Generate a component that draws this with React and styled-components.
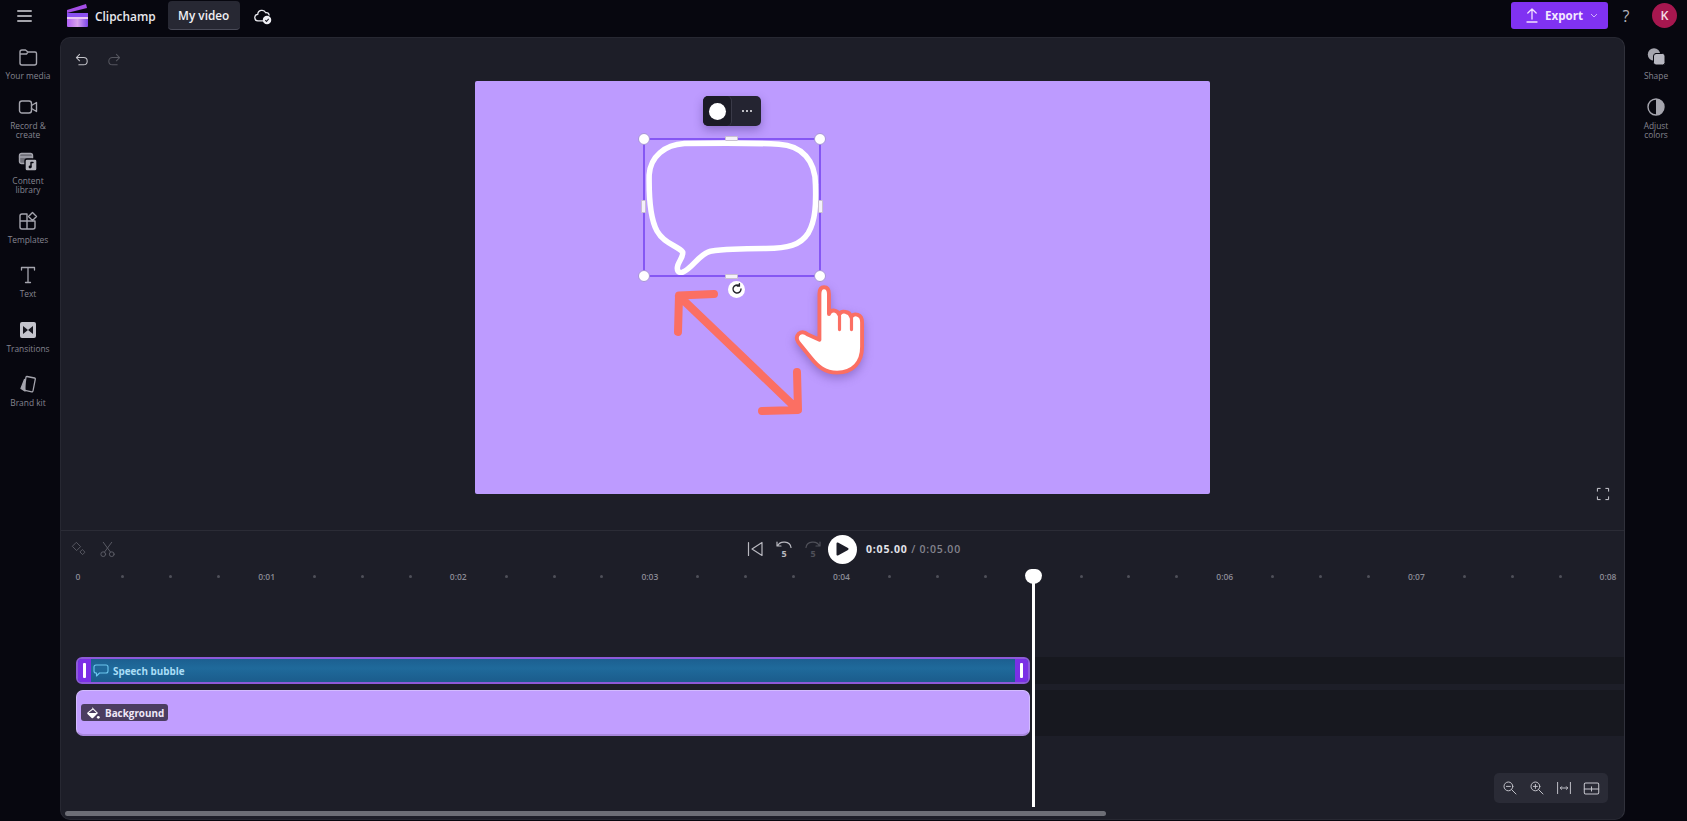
import React from "react";
import styled, { createGlobalStyle } from "styled-components";

const Global = createGlobalStyle`
    html, body, #root {
        margin: 0;
        height: 100%;
        background: #07070f;
    }
    body {
        font-family: "Open Sans", "Noto Sans", sans-serif;
        overflow: hidden;
    }
`

const Page = styled.div`
    width: 100vw;
    height: 100vh;
    display: grid;
    grid-template-columns: 60px 1fr 62px;
    grid-template-rows: 37px 1fr;
`

const TopBar = styled.header`
    grid-column: 1 / -1;
    display: flex;
    align-items: center;
    padding: 0 10px 6px 17px;
    color: #e8e8ee;
`

const MenuBtn = styled.div`
    width: 15px;
    display: flex;
    margin-right: 34px;
    svg { display: block; }
`

const Brand = styled.div`
    font-size: 11.9px;
    font-weight: 600;
    margin-left: 7px;
    margin-right: 12px;
`

const Tab = styled.div`
    width: 72px;
    height: 29px;
    display: flex;
    align-items: center;
    justify-content: center;
    background: #272833;
    border-bottom: 1px solid #4a4b58;
    border-radius: 4px;
    font-size: 11.8px;
    font-weight: 600;
    box-sizing: border-box;
    color: #f0f0f5;
`

const CloudWrap = styled.div`
    margin-left: 14px;
    display: flex;
`

const TopRight = styled.div`
    margin-left: auto;
    display: flex;
    align-items: center;
`

const ExportBtn = styled.div`
    width: 97px;
    height: 27px;
    background: #8032f2;
    border-radius: 3px;
    display: flex;
    align-items: center;
    padding-left: 15px;
    box-sizing: border-box;
    gap: 7px;
    color: #f2e8ff;
    font-size: 11.6px;
    font-weight: 700;
`

const Help = styled.div`
    margin: 0 20px 0 12px;
    font-size: 16px;
    color: #b4b4bc;
    width: 12px;
    text-align: center;
`

const Avatar = styled.div`
    width: 25px;
    height: 25px;
    border-radius: 50%;
    background: #a6174f;
    display: flex;
    align-items: center;
    justify-content: center;
    font-size: 12.5px;
    font-weight: 600;
    color: #f4dbe4;
`

const Rail = styled.nav`
    display: grid;
    grid-template-rows: ${p => p.$rows};
    padding: 10px ${p => p.$inset || 0}px 0 0;
    justify-items: center;
    align-content: start;
`

const RailItem = styled.div`
    display: flex;
    flex-direction: column;
    align-items: center;
    color: #a5a5ae;
    width: 56px;
    svg { display: block; height: 20px; }
`

const RailLabel = styled.span`
    margin-top: 4px;
    font-size: 8.4px;
    line-height: 9px;
    text-align: center;
    color: #85858f;
`

const Panel = styled.main`
    position: relative;
    display: flex;
    flex-direction: column;
    margin-bottom: 1px;
    background: #1d1e28;
    border: 1px solid #272832;
    border-right-color: #30313b;
    border-radius: 10px;
    overflow: hidden;
    box-sizing: border-box;
`

const Stage = styled.section`
    height: 492px;
    flex: none;
    position: relative;
    display: flex;
    flex-direction: column;
`

const History = styled.div`
    height: 43px;
    display: flex;
    align-items: center;
    padding: 0 0 0 13px;
    gap: 16px;
    color: #c2c2c8;
    flex: none;
`

const RedoWrap = styled.span`
    display: flex;
    color: #55565f;
`

const Canvas = styled.div`
    position: relative;
    width: 735px;
    height: 413px;
    margin: 0 auto;
    background: #bd9bff;
    border-radius: 2px;
`

const ResizeHint = styled.svg`
    position: absolute;
    left: 195px;
    top: 205px;
`

const HandCursor = styled.svg`
    position: absolute;
    left: 318px;
    top: 204px;
    filter: drop-shadow(0 4px 5px rgba(70, 40, 120, .35));
`

const FloatPill = styled.div`
    position: absolute;
    left: 228px;
    top: 15px;
    width: 58px;
    height: 30px;
    display: flex;
    background: #242431;
    border-radius: 5px;
    box-shadow: 0 4px 10px rgba(50, 30, 100, .35);
    overflow: hidden;
`

const Swatch = styled.div`
    width: 28px;
    display: flex;
    align-items: center;
    justify-content: center;
    background: #1b1b26;
    border-right: 1px solid #3a3a48;
    border-radius: 5px;
    &::after {
        content: "";
        width: 17px;
        height: 17px;
        background: #fff;
        border-radius: 50%;
    }
`

const Dots = styled.div`
    flex: 1;
    color: #e6e6ec;
    display: flex;
    align-items: center;
    justify-content: center;
    gap: 2px;
    i {
        width: 2px;
        height: 2px;
        border-radius: 50%;
        background: #f0f0f5;
    }
`

const Selection = styled.div`
    position: absolute;
    left: 168px;
    top: 56.5px;
    width: 178px;
    height: 139px;
    border: 2px solid #8557f3;
    box-sizing: border-box;
    svg { display: block; width: 100%; height: 100%; }
`

const Corner = styled.span`
    position: absolute;
    ${p => p.$y}: -7px;
    ${p => p.$x}: -7px;
    width: 12px;
    height: 12px;
    background: #fff;
    border: 1px solid #a794d8;
    box-sizing: border-box;
    border-radius: 50%;
`

const EdgeH = styled.span`
    position: absolute;
    ${p => p.$y}: -4px;
    left: 50%;
    margin-left: -7px;
    width: 13px;
    height: 5px;
    background: #f4f0fa;
    border: 1px solid #c8c0d0;
    box-sizing: border-box;
    border-radius: 1px;
`

const EdgeV = styled.span`
    position: absolute;
    ${p => p.$x}: -4px;
    top: 50%;
    margin-top: -7px;
    width: 5px;
    height: 13px;
    background: #f4f0fa;
    border: 1px solid #c8c0d0;
    box-sizing: border-box;
    border-radius: 1px;
`

const RotateKnob = styled.div`
    position: absolute;
    left: 83px;
    bottom: -23px;
    width: 17px;
    height: 17px;
    background: #fff;
    border-radius: 50%;
    display: flex;
    align-items: center;
    justify-content: center;
    svg { width: 12px; height: 12px; }
`

const FullScreen = styled.div`
    position: absolute;
    right: 14px;
    top: 449px;
    color: #cfcfd6;
    display: flex;
`

const Timeline = styled.section`
    flex: 1;
    display: flex;
    flex-direction: column;
    border-top: 1px solid #2b2c36;
`

const TimeBar = styled.div`
    height: 36px;
    display: flex;
    align-items: center;
    flex: none;
`

const EditTools = styled.div`
    width: 684px;
    padding-left: 10px;
    box-sizing: border-box;
    display: flex;
    align-items: center;
    gap: 12px;
    color: #5d5e68;
`

const Transport = styled.div`
    display: flex;
    align-items: center;
    color: #b9b9c0;
    gap: 9px;
`

const ForwardWrap = styled.span`
    display: flex;
    color: #4f5059;
`

const PlayBtn = styled.div`
    width: 29px;
    height: 29px;
    border-radius: 50%;
    background: #fff;
    display: flex;
    align-items: center;
    justify-content: center;
    margin-left: -4px;
`

const Clock = styled.div`
    font-size: 10.5px;
    letter-spacing: .8px;
    font-weight: 700;
    color: #e4e4ea;
    span {
        font-weight: 600;
        color: #83838d;
    }
`

const Ruler = styled.div`
    height: 12px;
    margin-top: 3px;
    padding: 0 16px 0 14px;
    display: flex;
    align-items: center;
    justify-content: space-between;
    flex: none;
`

const Tick = styled.div`
    width: 0;
    display: flex;
    justify-content: center;
    overflow: visible;
    font-size: 8.5px;
    font-weight: 600;
    white-space: nowrap;
    color: #8b8b95;
    transform: translateX(${p => p.$nudge || 0}px);
`

const TickDot = styled.i`
    flex: none;
    width: 3px;
    height: 3px;
    border-radius: 50%;
    background: #4f5059;
`

const Tracks = styled.div`
    margin-top: 75px;
    display: flex;
    flex-direction: column;
    gap: 6px;
`

const Lane = styled.div`
    display: flex;
    height: ${p => p.$h}px;
    padding-left: 15px;
`

const LaneRest = styled.div`
    flex: 1;
    background: #17181f;
    margin-left: 3px;
`

const BubbleClip = styled.div`
    width: 954px;
    flex: none;
    display: flex;
    align-items: stretch;
    background: linear-gradient(#1c5f90, #1f6a9b 40%, #1b5c8c);
    border: 2px solid #8d5ad8;
    border-radius: 6px;
    overflow: hidden;
    box-sizing: border-box;
`

const ClipGrip = styled.div`
    width: 13px;
    flex: none;
    background: #7b2fe6;
    display: flex;
    align-items: center;
    justify-content: center;
    &::after {
        content: "";
        width: 3px;
        height: 15px;
        background: #fff;
        border-radius: 1px;
    }
`

const ClipBody = styled.div`
    flex: 1;
    display: flex;
    align-items: center;
    padding-left: 2px;
    gap: 4px;
    color: #a9ddf6;
    font-size: 9.9px;
    font-weight: 700;
`

const BackgroundClip = styled.div`
    width: 954px;
    flex: none;
    display: flex;
    align-items: center;
    padding-left: 4px;
    background: #c19eff;
    border: 1px solid #d3bbff;
    border-bottom: 2px solid #a888dc;
    border-radius: 7px;
    box-sizing: border-box;
`

const ClipTag = styled.div`
    height: 17px;
    padding: 0 4px 0 5px;
    display: flex;
    align-items: center;
    gap: 5px;
    background: #4b3d60;
    border-radius: 3px;
    color: #efe8f8;
    font-size: 9.9px;
    font-weight: 700;
`

const Playhead = styled.div`
    position: absolute;
    left: 971px;
    top: 531px;
    bottom: 12px;
    width: 3px;
    background: #fff;
    &::before {
        content: "";
        position: absolute;
        left: -7px;
        top: 0;
        width: 17px;
        height: 15px;
        background: #fff;
        border-radius: 7px 7px 9px 9px;
    }
`

const ZoomTools = styled.div`
    position: absolute;
    right: 16px;
    bottom: 16px;
    width: 114px;
    height: 30px;
    display: flex;
    align-items: center;
    justify-content: space-around;
    padding: 0 3px;
    box-sizing: border-box;
    background: #2a2b36;
    border-radius: 5px;
    color: #c6c6cd;
`

const Scrollbar = styled.div`
    position: absolute;
    left: 4px;
    bottom: 3px;
    width: 1041px;
    height: 5px;
    background: #6d6e76;
    border-radius: 3px;
`

const Ico = ({ s = 20, w, h, children, sw = 1.4, fill = "none", vb }) => (
    <svg width={w || s} height={h || s} viewBox={vb || "0 0 20 20"} fill={fill} stroke="currentColor"
        strokeWidth={sw} strokeLinecap="round" strokeLinejoin="round">
        {children}
    </svg>
)

const Logo = () => (
    <svg width="22" height="23" viewBox="0 0 22 23">
        <defs>
            <linearGradient id="clap" x1="0" y1="0" x2="1" y2="0">
                <stop offset="0" stopColor="#b061f5" />
                <stop offset=".5" stopColor="#d9a2ee" />
                <stop offset="1" stopColor="#7b45e8" />
            </linearGradient>
        </defs>
        <path d="M1 9 L21 4 L20 0 L1 6 Z" fill="#a44ee6" />
        <rect x="1" y="9" width="21" height="14" rx="1" fill="url(#clap)" />
        <rect x="1" y="9" width="21" height="4" fill="#8a4ff0" />
        <rect x="1" y="13" width="21" height="2" fill="#e9c6f5" />
    </svg>
)

const Cloud = () => (
    <svg width="18" height="18" viewBox="0 0 17 17" fill="none" stroke="#e8e8ee" strokeWidth="1.2">
        <path d="M9 13 H4 a3 3 0 0 1-.5-6 a4 4 0 0 1 7.6-1.6 A3 3 0 0 1 14.4 8" />
        <circle cx="12.3" cy="12.3" r="4" fill="#f0f0f5" stroke="none" />
        <path d="M10.6 12.4 l1.2 1.2 l2.1-2.4" stroke="#1b1b26" strokeWidth="1" />
    </svg>
)

const railItems = [
    {
        label: ["Your media"], icon: (
            <Ico w={20}><path d="M2 5 a2 2 0 0 1 2-2 h3.5 l2.5 2 h7 a1.5 1.5 0 0 1 1.5 1.5 V16 a2 2 0 0 1-2 2 H4 a2 2 0 0 1-2-2 Z M2 7 h6.5 l1.5-2" /></Ico>
        )
    },
    {
        label: ["Record &", "create"], icon: (
            <Ico><rect x="1.5" y="4" width="12" height="12" rx="2.5" /><path d="M13.5 8.5 L18.5 5.5 V14.5 L13.5 11.5" /></Ico>
        )
    },
    {
        label: ["Content", "library"], icon: (
            <Ico>
                <rect x="1.5" y="1.5" width="13" height="10" rx="2" fill="#6f6f78" />
                <path d="M1.5 5 h13" />
                <rect x="7" y="7" width="12" height="12" rx="2" fill="#b5b5bd" stroke="#07070f" />
                <circle cx="12" cy="15" r="1.4" fill="#07070f" stroke="none" />
                <path d="M13 15 V10.5 h2" stroke="#07070f" />
            </Ico>
        )
    },
    {
        label: ["Templates"], icon: (
            <Ico>
                <path d="M2 5 a2 2 0 0 1 2-2 h5 v7 H2 Z M2 10 h7 v8 H4 a2 2 0 0 1-2-2 Z M9 10 h8 v6 a2 2 0 0 1-2 2 H9 Z" />
                <path d="M14.5 1.5 L18.5 5.5 L14.5 9.5 L10.5 5.5 Z" />
            </Ico>
        )
    },
    {
        label: ["Text"], icon: (
            <Ico sw={1.3}><path d="M3.5 5 V2.5 H16.5 V5 M10 2.5 V17.5 M7.5 17.5 H12.5" /></Ico>
        )
    },
    {
        label: ["Transitions"], icon: (
            <svg width="20" height="20" viewBox="0 0 20 20">
                <path d="M4 2 H16 a2 2 0 0 1 2 2 V16 a2 2 0 0 1-2 2 H4 a2 2 0 0 1-2-2 V4 a2 2 0 0 1 2-2 Z" fill="#c4c4cc" />
                <path d="M5 6 L10 10 L5 14 Z" fill="#17171f" />
                <path d="M15 6 L10 10 L15 14 Z" fill="#17171f" />
            </svg>
        )
    },
    {
        label: ["Brand kit"], icon: (
            <Ico sw={1.3}>
                <path d="M9 2.5 L16.5 4 a1 1 0 0 1 .8 1.2 L15 17 a1 1 0 0 1-1.2.8 L7 16.4 a1 1 0 0 1-.8-1.2 L8 3 a1 1 0 0 1 1-.5 Z" />
                <path d="M6.5 5.5 L3 14.5 L7 17 Z" fill="currentColor" />
            </Ico>
        )
    },
]

const rightItems = [
    {
        label: ["Shape"], icon: (
            <Ico sw={0} fill="currentColor">
                <circle cx="8" cy="7.5" r="6.2" />
                <rect x="7.5" y="6.5" width="11.5" height="11.5" rx="2.5" fill="#b7b7c0" stroke="#07070f" strokeWidth="1" />
            </Ico>
        )
    },
    {
        label: ["Adjust", "colors"], icon: (
            <Ico sw={1.4}>
                <circle cx="10" cy="10" r="8" />
                <path d="M10 2 a8 8 0 0 1 0 16 Z" fill="currentColor" stroke="none" />
            </Ico>
        )
    },
]

const ToolRail = ({ items, rows, inset }) => (
    <Rail $rows={rows} $inset={inset}>
        {items.map((item) => (
            <RailItem key={item.label.join(" ")}>
                {item.icon}
                <RailLabel>
                    {item.label.map((line) => <div key={line}>{line}</div>)}
                </RailLabel>
            </RailItem>
        ))}
    </Rail>
)

const ticks = Array.from({ length: 33 }, (_, i) => i)

const App = () => (
    <Page>
        <Global />
        <TopBar>
            <MenuBtn>
                <svg width="15" height="12" viewBox="0 0 15 12" stroke="#d8d8de" strokeWidth="1.5" strokeLinecap="round">
                    <path d="M0.8 1 H14.2 M0.8 6 H14.2 M0.8 11 H14.2" />
                </svg>
            </MenuBtn>
            <Logo />
            <Brand>Clipchamp</Brand>
            <Tab>My video</Tab>
            <CloudWrap><Cloud /></CloudWrap>
            <TopRight>
                <ExportBtn>
                    <svg width="12" height="15" viewBox="0 0 12 15" fill="none" stroke="#f2e0ff" strokeWidth="1.3" strokeLinecap="round" strokeLinejoin="round">
                        <path d="M6 11 V1 M1.8 5 L6 1 L10.2 5 M1 14 H11" />
                    </svg>
                    Export
                    <svg width="8" height="5" viewBox="0 0 8 5" fill="none" stroke="#d0b0fa" strokeWidth="1"><path d="M1 1 L4 4 L7 1" /></svg>
                </ExportBtn>
                <Help>?</Help>
                <Avatar>K</Avatar>
            </TopRight>
        </TopBar>

        <ToolRail items={railItems} rows="50px 55px 59px 54px 55px 54px 54px" inset={4} />

        <Panel>
            <Stage>
                <History>
                    <Ico s={16} sw={1.3}><path d="M7 3 L3 7 L7 11 M3 7 H12 a4.5 4.5 0 0 1 0 9 H6" /></Ico>
                    <RedoWrap>
                        <Ico s={16} sw={1.3}><path d="M13 3 L17 7 L13 11 M17 7 H8 a4.5 4.5 0 0 0 0 9 H14" /></Ico>
                    </RedoWrap>
                </History>
                <Canvas>
                    <FloatPill>
                        <Swatch />
                        <Dots><i /><i /><i /></Dots>
                    </FloatPill>
                    <Selection>
                        <svg viewBox="72 173 528 414" fill="none" stroke="#fff" strokeWidth="17" strokeLinejoin="round" strokeLinecap="round">
                            <path d="M190 184 C290 182 400 182 480 186 C550 190 592 235 592 310 C594 370 592 420 570 458 C545 497 505 505 440 506 C380 506 320 507 270 514 C235 522 215 567 185 578 C172 582 165 574 170 557 C175 542 186 532 185 517 C170 497 128 492 106 452 C83 410 81 340 82 280 C86 223 130 188 190 184 Z" />
                        </svg>
                        <Corner $x="left" $y="top" />
                        <Corner $x="right" $y="top" />
                        <Corner $x="left" $y="bottom" />
                        <Corner $x="right" $y="bottom" />
                        <EdgeH $y="top" />
                        <EdgeH $y="bottom" />
                        <EdgeV $x="left" />
                        <EdgeV $x="right" />
                        <RotateKnob>
                            <svg viewBox="0 0 12 12" fill="none" stroke="#26262e" strokeWidth="1.4" strokeLinecap="round">
                                <path d="M10 6 A4 4 0 1 1 8.2 2.7 M8.4 .8 V3 H6.2" />
                            </svg>
                        </RotateKnob>
                    </Selection>
                    <ResizeHint width="136" height="132" viewBox="0 0 136 132" fill="none" stroke="#fb6f63" strokeWidth="8" strokeLinecap="round" strokeLinejoin="round">
                        <path d="M44 8 L9 9.5 L8 46 M9 10 L127 123 M127 86 L128 124 L92 125" />
                    </ResizeHint>
                    <HandCursor width="74" height="92" viewBox="430 50 210 260">
                        <path d="M505 205 V75 Q505 56 518 56 Q532 56 532 75 V132 Q536 120 548 122 Q558 124 561 134 Q566 122 580 126 Q592 128 595 140 Q602 130 614 134 Q626 138 626 155 V225 C626 270 600 298 555 298 C520 298 500 280 480 255 L445 212 Q436 198 446 188 Q458 178 472 190 Z"
                            fill="#fff" stroke="#fb6f63" strokeWidth="11" strokeLinejoin="round" />
                        <path d="M562 138 V176 M596 142 V176" stroke="#fb6f63" strokeWidth="9" strokeLinecap="round" fill="none" />
                    </HandCursor>
                </Canvas>
                <FullScreen>
                    <Ico s={14} sw={1.4}><path d="M2 6 V2 H6 M14 2 H18 V6 M18 14 V18 H14 M6 18 H2 V14" /></Ico>
                </FullScreen>
            </Stage>

            <Timeline>
                <TimeBar>
                    <EditTools>
                        <Ico s={16} sw={1.1}>
                            <path d="M7 2 L12 7 L7 12 L2 7 Z M14.5 11 L17.5 14 L14.5 17 L11.5 14 Z" />
                        </Ico>
                        <Ico s={17} sw={1.1}>
                            <circle cx="5" cy="15.5" r="2.8" />
                            <circle cx="15" cy="15.5" r="2.8" />
                            <path d="M6.5 13 L15 1.5 M13.5 13 L5 1.5" />
                        </Ico>
                    </EditTools>
                    <Transport>
                        <Ico s={20} sw={1.2}><path d="M3.5 3.5 V16.5 M17 3.5 V16.5 L7 10 Z" /></Ico>
                        <Ico s={20} sw={1.2}>
                            <path d="M3 3 V7 H7 M3.5 7 A7 6 0 0 1 17 8.5" />
                            <text x="10" y="18" fontSize="9" fontWeight="700" fill="currentColor" stroke="none" textAnchor="middle" fontFamily="Open Sans">5</text>
                        </Ico>
                        <ForwardWrap>
                            <Ico s={20} sw={1.2}>
                                <path d="M17 3 V7 H13 M16.5 7 A7 6 0 0 0 3 8.5" />
                                <text x="10" y="18" fontSize="9" fontWeight="700" fill="currentColor" stroke="none" textAnchor="middle" fontFamily="Open Sans">5</text>
                            </Ico>
                        </ForwardWrap>
                        <PlayBtn>
                            <svg width="13" height="14" viewBox="0 0 13 14"><path d="M1.5 1.5 L11.5 7 L1.5 12.5 Z" fill="#1d1e28" stroke="#1d1e28" strokeWidth="2" strokeLinejoin="round" /></svg>
                        </PlayBtn>
                        <Clock>0:05.00 <span>/ 0:05.00</span></Clock>
                    </Transport>
                </TimeBar>

                <Ruler>
                    {ticks.map((i) => (
                        <Tick key={i} $nudge={i === 0 ? 3 : 0}>
                            {i % 4 === 0
                                ? (i === 20 ? null : (i === 0 ? "0" : `0:0${i / 4}`))
                                : <TickDot />}
                        </Tick>
                    ))}
                </Ruler>

                <Tracks>
                    <Lane $h={27}>
                        <BubbleClip>
                            <ClipGrip />
                            <ClipBody>
                                <svg width="16" height="13" viewBox="0 0 16 13" fill="none" stroke="#6cc6ee" strokeWidth="1.1" strokeLinejoin="round">
                                    <path d="M3 1 H13 a2 2 0 0 1 2 2 V7 a2 2 0 0 1-2 2 H6.5 L3.5 12 V9 H3 a2 2 0 0 1-2-2 V3 a2 2 0 0 1 2-2 Z" />
                                </svg>
                                Speech bubble
                            </ClipBody>
                            <ClipGrip />
                        </BubbleClip>
                        <LaneRest />
                    </Lane>
                    <Lane $h={46}>
                        <BackgroundClip>
                            <ClipTag>
                                <svg width="14" height="14" viewBox="0 0 14 14" fill="#fff">
                                    <path d="M6 1 L7 2 L12 7 L7 12 a1 1 0 0 1-1.4 0 L1.5 8 a1 1 0 0 1 0-1.4 L6.5 2.5 Z" />
                                    <path d="M2.5 7 H10.5 L7 3.5 Z" fill="#4b3d60" />
                                    <circle cx="12.3" cy="11.3" r="1.4" />
                                </svg>
                                Background
                            </ClipTag>
                        </BackgroundClip>
                        <LaneRest />
                    </Lane>
                </Tracks>
            </Timeline>

            <Playhead />

            <ZoomTools>
                <Ico s={16} sw={1.2}><circle cx="8" cy="8" r="5.5" /><path d="M12 12 L17.5 17.5 M5.5 8 H10.5" /></Ico>
                <Ico s={16} sw={1.2}><circle cx="8" cy="8" r="5.5" /><path d="M12 12 L17.5 17.5 M5.5 8 H10.5 M8 5.5 V10.5" /></Ico>
                <Ico s={16} sw={1.2}><path d="M2 3 V17 M18 3 V17 M5.5 10 H14.5 M7 8.3 L5.3 10 L7 11.7 M13 8.3 L14.7 10 L13 11.7" /></Ico>
                <Ico s={17} sw={1.2}><rect x="1.5" y="3.5" width="17" height="13" rx="1.5" /><path d="M1.5 10.5 H7 M13 10.5 H18.5 M10 8 V13 M7.5 10.5 H12.5" /></Ico>
            </ZoomTools>

            <Scrollbar />
        </Panel>

        <ToolRail items={rightItems} rows="50px 55px" />
    </Page>
)

export default App
